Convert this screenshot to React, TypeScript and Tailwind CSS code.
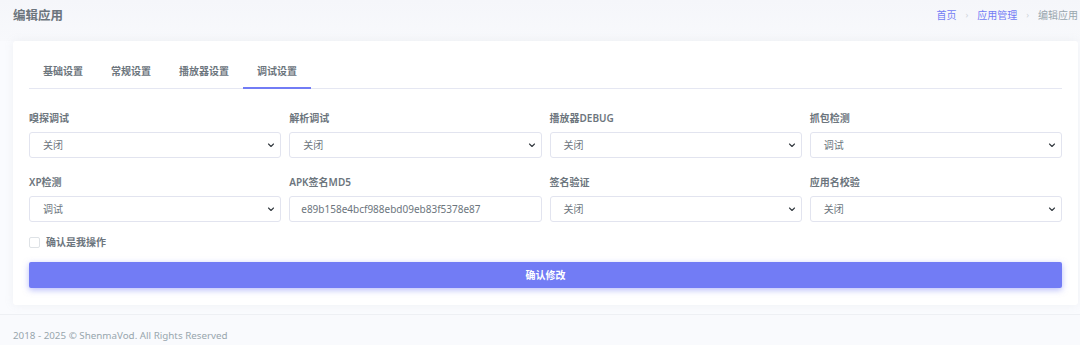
import React from "react";

const font = { fontFamily: '"Noto Sans", "Noto Sans CJK SC", sans-serif' };

const tabs = ["基础设置", "常规设置", "播放器设置", "调试设置"];

type Field = { label: string; value: string; kind: "select" | "input" };

const rows: Field[][] = [
  [
    { label: "嗅探调试", value: "关闭", kind: "select" },
    { label: "解析调试", value: "关闭", kind: "select" },
    { label: "播放器DEBUG", value: "关闭", kind: "select" },
    { label: "抓包检测", value: "调试", kind: "select" },
  ],
  [
    { label: "XP检测", value: "调试", kind: "select" },
    { label: "APK签名MD5", value: "e89b158e4bcf988ebd09eb83f5378e87", kind: "input" },
    { label: "签名验证", value: "关闭", kind: "select" },
    { label: "应用名校验", value: "关闭", kind: "select" },
  ],
];

function Chevron() {
  return (
    <svg width="8" height="8" viewBox="0 0 16 16" fill="none">
      <path d="M3 6l5 5 5-5" stroke="#343a40" strokeWidth="2.2" strokeLinecap="round" strokeLinejoin="round" />
    </svg>
  );
}

function FieldBox({ f }: { f: Field }) {
  return (
    <div className="flex flex-col">
      <label className="text-[10px] leading-[15px] font-semibold text-[#6c757d]">{f.label}</label>
      <div
        className={`mt-[6px] h-[26px] flex items-center justify-between border border-[#e2e4ef] rounded-[3px] bg-white text-[10px] text-[#6c757d] ${
          f.kind === "select" ? "pl-[13px] pr-[5px]" : "px-[11px]"
        }`}
      >
        <span>{f.value}</span>
        {f.kind === "select" && <Chevron />}
      </div>
    </div>
  );
}

export default function App() {
  return (
    <div className="w-[1080px] h-[345px] overflow-hidden bg-[#fafbfe]" style={font}>
      <div className="pl-[13px] pr-[2px] bg-gradient-to-b from-[#f5f6fa] to-[#f8f9fc]">
        <div className="h-[41px] flex items-start justify-between pt-[6px]">
          <h1 className="text-[12.5px] leading-[20px] font-bold text-[#6c757d]">编辑应用</h1>
          <div className="flex items-center gap-[9px] text-[10px] leading-[18px] whitespace-nowrap">
            <span className="text-[#727cf5]">首页</span>
            <span className="text-[#ced4da] text-[9px]">›</span>
            <span className="text-[#727cf5]">应用管理</span>
            <span className="text-[#ced4da] text-[9px]">›</span>
            <span className="text-[#98a6ad]">编辑应用</span>
          </div>
        </div>
      </div>
      <div className="pl-[13px] pr-[2px]">
        <div className="bg-white rounded-[3px] shadow-[0_0_10px_rgba(154,161,171,0.12)] px-[16px] pt-[15px] h-[264px]">
          <div className="flex border-b border-[#e5e7f2]">
            {tabs.map((t, i) => (
              <div
                key={t}
                className={`px-[14px] py-[8px] text-[10px] leading-[15px] font-semibold text-[#6c757d] border-b-2 -mb-px ${
                  i === 3 ? "border-[#727cf5]" : "border-transparent"
                }`}
              >
                {t}
              </div>
            ))}
          </div>
          <div className="pt-[22px] flex flex-col gap-[17px]">
            {rows.map((r, ri) => (
              <div key={ri} className="grid grid-cols-4 gap-[8px]">
                {r.map((f) => (
                  <FieldBox key={f.label} f={f} />
                ))}
              </div>
            ))}
          </div>
          <div className="mt-[13px] flex items-center gap-[6px]">
            <span className="w-[11px] h-[11px] rounded-[2px] border border-[#dee2e6] bg-white" />
            <span className="text-[10px] leading-[15px] font-semibold text-[#6c757d]">确认是我操作</span>
          </div>
          <button className="mt-[12px] block w-full h-[26px] rounded-[2px] bg-[#727cf5] text-white text-[10px] leading-[26px] font-semibold shadow-[0_2px_6px_rgba(114,124,245,0.5)]">
            确认修改
          </button>
        </div>
      </div>
      <div className="mt-[9px] border-t border-[#eef0f4] bg-[#f9fafd] h-[40px] pl-[13px] pt-[13px]">
        <p className="text-[9.8px] leading-[15px] text-[#98a6ad] whitespace-nowrap">2018 - 2025 © ShenmaVod. All Rights Reserved</p>
      </div>
    </div>
  );
}
